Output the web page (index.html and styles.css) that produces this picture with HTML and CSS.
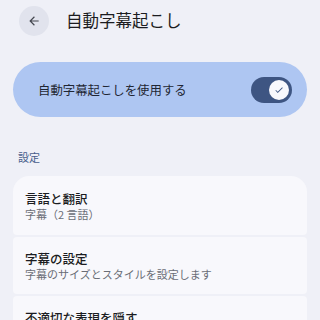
FILE: index.html
```html
<!DOCTYPE html>
<html lang="ja">

<head>
    <meta charset="UTF-8">
    <title>自動字幕起こし</title>
    <link rel="stylesheet" href="styles.css">
</head>

<body>

    <header class="top-bar">
        <button class="back-btn" aria-label="戻る">
            <svg width="14" height="14" viewBox="0 0 24 24">
                <path d="M20 11H7.8l5.6-5.6L12 4l-8 8 8 8 1.4-1.4L7.8 13H20z" fill="#44474f" />
            </svg>
        </button>
        <h1>自動字幕起こし</h1>
    </header>

    <section class="main-switch">
        <span>自動字幕起こしを使用する</span>
        <div class="toggle">
            <div class="knob">
                <svg width="10" height="10" viewBox="0 0 24 24">
                    <path d="M9 16.2 4.8 12l-1.4 1.4L9 19 21 7l-1.4-1.4z" fill="#3e5582" />
                </svg>
            </div>
        </div>
    </section>

    <p class="section-title">設定</p>

    <section class="card-list">
        <article class="card first">
            <h2>言語と翻訳</h2>
            <p>字幕（2 言語）</p>
        </article>
        <article class="card">
            <h2>字幕の設定</h2>
            <p>字幕のサイズとスタイルを設定します</p>
        </article>
        <article class="card">
            <h2>不適切な表現を隠す</h2>
        </article>
    </section>

</body>

</html>
```

FILE: styles.css
```css
body {
    background-color: #eff0f7;
    margin: 0;
    width: 320px;
    height: 320px;
    overflow: hidden;
    font-family: "Noto Sans CJK JP", "Noto Sans", sans-serif;
    color: #1b1c21;
}

.top-bar {
    display: flex;
    align-items: center;
    height: 42px;
    padding-left: 19px;
}

.back-btn {
    width: 30px;
    height: 30px;
    border: none;
    border-radius: 50%;
    background-color: #e1e3ed;
    display: flex;
    align-items: center;
    justify-content: center;
    padding: 0;
}

.top-bar h1 {
    margin: 0 0 0 17px;
    font-size: 16.5px;
    font-weight: 400;
    line-height: 1.4;
}

.main-switch {
    margin: 20px 13px 0;
    height: 55px;
    border-radius: 28px;
    background-color: #aec6f2;
    display: flex;
    align-items: center;
    justify-content: space-between;
    padding: 0 15px 0 25px;
    font-size: 12.4px;
    color: #1f2633;
}

.toggle {
    width: 41px;
    height: 26px;
    border-radius: 13px;
    background-color: #3e5582;
    display: flex;
    align-items: center;
    justify-content: flex-end;
    padding-right: 3px;
    box-sizing: border-box;
}

.knob {
    width: 20px;
    height: 20px;
    border-radius: 50%;
    background-color: #f8f8fc;
    display: flex;
    align-items: center;
    justify-content: center;
}

.section-title {
    margin: 33px 0 0 18px;
    font-size: 11px;
    line-height: 14px;
    color: #485e8c;
}

.card-list {
    margin: 12px 13px 0;
    display: flex;
    flex-direction: column;
    gap: 2px;
}

.card {
    background-color: #f8f8fc;
    border-radius: 4px;
    height: 57px;
    padding: 14px 12px 0;
    box-sizing: border-box;
}

.card.first {
    border-radius: 16px 16px 4px 4px;
    height: 59px;
    padding-top: 15px;
}

.card h2 {
    margin: 0;
    font-size: 12.5px;
    font-weight: 500;
    line-height: 16px;
}

.card p {
    margin: 0;
    font-size: 11px;
    line-height: 14px;
    color: #6a6d76;
}
```
